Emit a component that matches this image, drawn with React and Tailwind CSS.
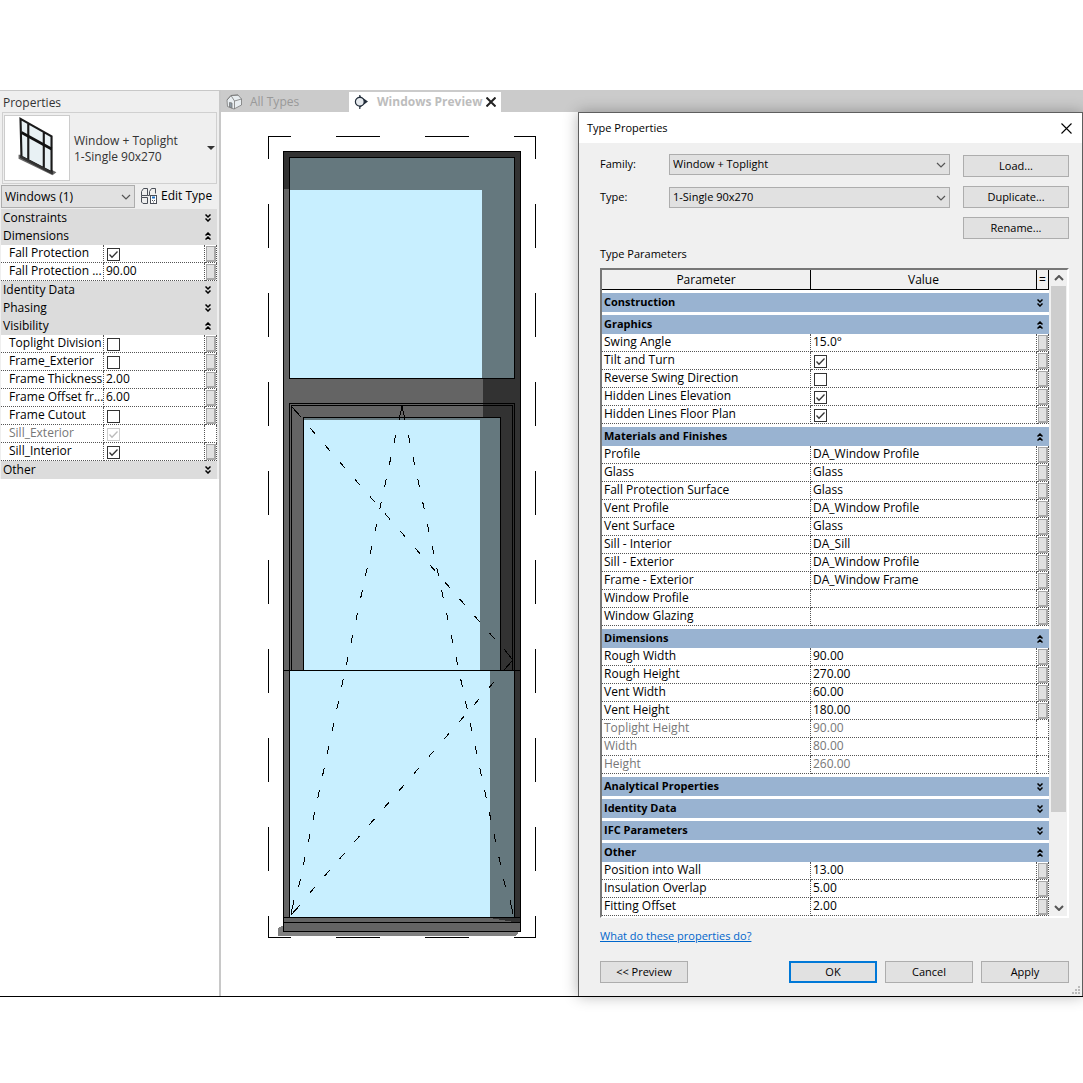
import React, { useState } from 'react';

const INSTANCE_GROUPS = [
  { name: 'Constraints', open: false, rows: [] },
  {
    name: 'Dimensions',
    open: true,
    rows: [
      { label: 'Fall Protection', checked: true },
      { label: 'Fall Protection ...', value: '90.00' },
    ],
  },
  { name: 'Identity Data', open: false, rows: [] },
  { name: 'Phasing', open: false, rows: [] },
  {
    name: 'Visibility',
    open: true,
    rows: [
      { label: 'Toplight Division', checked: false },
      { label: 'Frame_Exterior', checked: false },
      { label: 'Frame Thickness', value: '2.00' },
      { label: 'Frame Offset fr...', value: '6.00' },
      { label: 'Frame Cutout', checked: false },
      { label: 'Sill_Exterior', checked: true, disabled: true },
      { label: 'Sill_Interior', checked: true },
    ],
  },
  { name: 'Other', open: false, rows: [] },
];

const TYPE_GROUPS = [
  { name: 'Construction', open: false, rows: [] },
  {
    name: 'Graphics',
    open: true,
    rows: [
      { label: 'Swing Angle', value: '15.0°' },
      { label: 'Tilt and Turn', checked: true },
      { label: 'Reverse Swing Direction', checked: false },
      { label: 'Hidden Lines Elevation', checked: true },
      { label: 'Hidden Lines Floor Plan', checked: true },
    ],
  },
  {
    name: 'Materials and Finishes',
    open: true,
    rows: [
      { label: 'Profile', value: 'DA_Window Profile' },
      { label: 'Glass', value: 'Glass' },
      { label: 'Fall Protection Surface', value: 'Glass' },
      { label: 'Vent Profile', value: 'DA_Window Profile' },
      { label: 'Vent Surface', value: 'Glass' },
      { label: 'Sill - Interior', value: 'DA_Sill' },
      { label: 'Sill - Exterior', value: 'DA_Window Profile' },
      { label: 'Frame - Exterior', value: 'DA_Window Frame' },
      { label: 'Window Profile', value: '' },
      { label: 'Window Glazing', value: '' },
    ],
  },
  {
    name: 'Dimensions',
    open: true,
    rows: [
      { label: 'Rough Width', value: '90.00' },
      { label: 'Rough Height', value: '270.00' },
      { label: 'Vent Width', value: '60.00' },
      { label: 'Vent Height', value: '180.00' },
      { label: 'Toplight Height', value: '90.00', disabled: true },
      { label: 'Width', value: '80.00', disabled: true },
      { label: 'Height', value: '260.00', disabled: true },
    ],
  },
  { name: 'Analytical Properties', open: false, rows: [] },
  { name: 'Identity Data', open: false, rows: [] },
  { name: 'IFC Parameters', open: false, rows: [] },
  {
    name: 'Other',
    open: true,
    rows: [
      { label: 'Position into Wall', value: '13.00' },
      { label: 'Insulation Overlap', value: '5.00' },
      { label: 'Fitting Offset', value: '2.00' },
    ],
  },
];

// Double chevron at the end of a group header
const Expander = ({ open }) => (
  <svg viewBox="0 0 6 8" className={`h-2 w-[6px] ${open ? 'rotate-180' : ''}`} fill="none" stroke="#000" strokeWidth="1.5">
    <path d="M0.5 0.5 3 3 5.5 0.5M0.5 4.5 3 7 5.5 4.5" />
  </svg>
);

const Chevron = ({ up, className = '' }) => (
  <svg viewBox="0 0 10 6" className={`h-[6px] w-[10px] ${className}`} fill="none" stroke="#555" strokeWidth="1.2">
    <path d={up ? 'M1 5 5 1 9 5' : 'M1 1 5 5 9 1'} />
  </svg>
);

const CheckBox = ({ id, initial, disabled }) => {
  const [checked, setChecked] = useState(initial);
  return (
    <span className="grid h-[13px] w-[13px]">
      <input
        id={id}
        type="checkbox"
        checked={checked}
        disabled={disabled}
        onChange={(e) => setChecked(e.target.checked)}
        className="col-start-1 row-start-1 h-[13px] w-[13px] appearance-none border border-[#333] bg-white disabled:border-[#ccc]"
      />
      {checked && (
        <svg viewBox="0 0 13 13" className="pointer-events-none col-start-1 row-start-1" fill="none" stroke={disabled ? '#bbb' : '#333'} strokeWidth="1.3">
          <path d="M2.5 6.5 5 9.3 10.5 3.5" />
        </svg>
      )}
    </span>
  );
};

const Select = ({ id, label, options, className }) => (
  <span className="grid flex-1 items-center">
    <select
      id={id}
      aria-label={label}
      className={`col-start-1 row-start-1 w-full appearance-none border border-[#adadad] bg-[#e1e1e1] pr-6 text-black ${className}`}
    >
      {options.map((option) => (
        <option key={option}>{option}</option>
      ))}
    </select>
    <Chevron className="pointer-events-none col-start-1 row-start-1 mr-1 justify-self-end" />
  </span>
);

const Button = ({ children, className = '', primary }) => (
  <button
    type="button"
    className={`h-[22px] bg-[#e1e1e1] text-center ${primary ? 'border-2 border-[#0078d7] leading-[18px]' : 'border border-[#adadad] leading-5'} ${className}`}
  >
    {children}
  </button>
);

const ParameterRow = ({ row, prefix, indent }) => {
  const id = `${prefix}-${row.label.replace(/\W+/g, '-')}`;
  return (
    <tr className={`h-[18px] bg-white ${row.disabled ? 'text-[#777]' : 'text-black'}`}>
      <td className={`overflow-hidden border-r border-b border-dotted border-[#555] p-0 whitespace-nowrap ${indent}`}>
        {row.checked === undefined ? (
          <span className="block h-[17px] leading-4">{row.label}</span>
        ) : (
          <label htmlFor={id} className="block h-[17px] leading-4">{row.label}</label>
        )}
      </td>
      <td className="border-r border-b border-dotted border-[#555] p-0 pl-0.5">
        {row.checked === undefined ? (
          <span className="block h-[17px] leading-4">{row.value}</span>
        ) : (
          <span className="block h-[17px] pt-[3px] pl-px">
            <CheckBox id={id} initial={row.checked} disabled={row.disabled} />
          </span>
        )}
      </td>
      <td className="border-r border-b border-dotted border-[#555] p-0 pl-px">
        {!row.disabled && (
          <button type="button" aria-label={`Associate ${row.label}`} className="block h-4 w-[10px] border border-r-2 border-b-2 border-[#a8a8a8] bg-[#e1e1e1]" />
        )}
      </td>
    </tr>
  );
};

const TypeThumbnail = () => (
  <svg viewBox="0 0 66 66" className="h-[66px] w-[66px] border border-[#ccc] bg-white">
    <path d="M14 40 18 40 53 58 49 61 14 44z" fill="#666" />
    <path d="M16 3 48 21V58L17 42z" fill="#e8f1f4" />
    <path d="M16 3 48 21V58L17 42zM24 8V46M40 17V54" fill="none" stroke="#1a1a1a" strokeWidth="2.2" />
    <path d="M17 17 48 34" stroke="#111" strokeWidth="2.8" />
    <path d="M16 42 49 59" stroke="#333" strokeWidth="2.5" />
  </svg>
);

const EditTypeIcon = () => (
  <svg viewBox="0 0 16 16" className="h-4 w-4" fill="none" stroke="#4a4f58" strokeWidth="1">
    <path d="M0.5 3.5 2.5 0.5H6.5V7.5H0.5zM8.5 3.5 10.5 0.5H14.5V5.5M8.5 3.5V7.5M0.5 9.5H6.5V15.5H2L0.5 14zM0.5 7.5V9.5M6.5 7.5H8.5" />
    <rect x="9.5" y="7.5" width="6" height="8" fill="#fff" />
    <path d="M11 9.5H14" stroke="#1c6fc4" strokeWidth="2" />
    <path d="M11 12.5H12M13 12.5H14M12 14H13" />
  </svg>
);

const PropertiesPanel = () => (
  <aside className="w-[221px] shrink-0 border-t border-r-2 border-[#c8c8c8]">
    <div className="bg-[#efefef]">
      <h2 className="h-[21px] pl-[3px] text-[12px] leading-6 text-[#333]">Properties</h2>
      <div className="mr-0.5 ml-0.5 flex h-[72px] items-center border border-[#d0d0d0] pl-px text-[#333]">
        <TypeThumbnail />
        <div className="flex-1 pt-0.5 pl-1 leading-4">
          <p>Window + Toplight</p>
          <p>1-Single 90x270</p>
        </div>
        <button type="button" aria-label="Change type" className="mr-px p-0">
          <svg viewBox="0 0 8 4" className="h-1 w-2"><path d="M0 0H8L4 4z" fill="#333" /></svg>
        </button>
      </div>
      <div className="flex h-[25px] items-center pl-px">
        <div className="flex w-[134px]">
          <Select label="Selection filter" options={['Windows (1)']} className="h-[23px] pl-[3px]" />
        </div>
        <button type="button" className="ml-1.5 flex items-center gap-1 pb-0.5 text-black">
          <EditTypeIcon />
          Edit Type
        </button>
      </div>
      <table className="ml-px w-[216px] table-fixed border-separate border-spacing-0">
        <colgroup>
          <col className="w-[103px]" />
          <col />
          <col className="w-[12px]" />
        </colgroup>
        {INSTANCE_GROUPS.map((group) => (
          <tbody key={group.name}>
            <tr className="h-[18px] bg-[#dcdcdc]">
              <th colSpan={3} className="p-0 text-left font-normal">
                <div className="flex items-center justify-between pr-[6px] pl-0.5 leading-[18px]">
                  {group.name}
                  <Expander open={group.open} />
                </div>
              </th>
            </tr>
            {group.rows.map((row) => (
              <ParameterRow key={row.label} row={row} prefix="instance" indent="pl-2" />
            ))}
          </tbody>
        ))}
      </table>
    </div>
  </aside>
);

const Tabs = () => (
  <div className="flex h-[22px] items-end bg-[#cbcbcb]">
    <button type="button" className="flex h-5 w-32 items-center gap-2 pl-[5px] text-[#999]">
      <svg viewBox="0 0 16 16" className="h-4 w-4" stroke="#777" strokeWidth="0.8">
        <path d="M1 6 5 1.5 12 1 15.5 5V11L8 15 1.5 12.5z" fill="#e8edf0" />
        <path d="M1 6 5 1.5 8.5 7V15M8.5 7 15.5 5M5 1.5 12 1" fill="none" />
        <path d="M3.5 8.5 6 9V14L3.5 13z" fill="#8c9aa5" />
      </svg>
      All Types
    </button>
    <div className="flex h-5 w-[152px] items-center justify-between bg-white pr-[5px] pl-[5px]">
      <button type="button" className="flex items-center gap-2 font-bold text-[#bdbdbd]">
        <svg viewBox="0 0 15 15" className="h-[15px] w-[15px]">
          <path d="M6 1 14 6.5 6 12.5z" fill="#222d3a" />
          <circle cx="5.8" cy="6.7" r="4.4" fill="#e6eaee" stroke="#222d3a" strokeWidth="1.2" />
          <path d="M5.8 0V2.5M5.8 11V14" stroke="#222d3a" strokeWidth="1.2" />
        </svg>
        Windows Preview
      </button>
      <button type="button" aria-label="Close tab">
        <svg viewBox="0 0 10 10" className="h-[10px] w-[10px]" stroke="#222" strokeWidth="2"><path d="M0.5 0.5 9.5 9.5M9.5 0.5 0.5 9.5" /></svg>
      </button>
    </div>
  </div>
);

// Elevation of the window with its opening lines
const WindowPreview = () => (
  <svg viewBox="266 134 272 806" className="h-[806px] w-[272px]" shapeRendering="crispEdges" fill="none" stroke="none">
    <g stroke="#000" strokeDasharray="44 45" strokeDashoffset="21">
      <path d="M268 136.5H536M268 937.5H536M268.5 136V938M535.5 136V938" />
    </g>

    <path d="M278 928 284 925H518V933L516 936H278z" fill="#808080" />
    <rect x="283" y="151" width="238" height="781" fill="#646464" />
    <path d="M283 151H521V922H514L490 918H515V671H501V418H483V378H515V157H290V189H283z" fill="#323232" />

    <rect x="290" y="157" width="225" height="222" fill="#65787e" />
    <rect x="290" y="190" width="192" height="189" fill="#c8efff" />
    <rect x="304" y="418" width="197" height="253" fill="#65787e" />
    <rect x="304" y="420" width="176" height="251" fill="#c8efff" />
    <rect x="290" y="671" width="225" height="247" fill="#65787e" />
    <rect x="290" y="671" width="200" height="247" fill="#c8efff" />

    <g stroke="#000">
      <path d="M283.5 151.5H520.5V931.5H283.5z" />
      <path d="M289.5 157.5H514.5V378.5H289.5z" />
      <path d="M289.5 670V403.5H514.5V670M291.5 670V405.5H512.5V670" />
      <path d="M303.5 670V417.5H500.5V670" />
      <path d="M283 670.5H521M289.5 670V917M514.5 670V917" />
      <path d="M283 917.5H521M283 922.5H521" />
    </g>

    <g stroke="#000">
      <path d="M402 406 399 420M402 406 405 420" />
      <path d="M294 900 291 914M510 900 513 914" />
      <path d="M292 407 301 417M504 649 512 659" />
      <path d="M512 661 504 670M300 905 291 915" />
    </g>
    <g stroke="#000" strokeDasharray="8 14.7">
      <path d="M395.7 435 298 890M408.3 435 506 890" />
      <path d="M310 428 496 640.5" />
      <path d="M494 682 308 895" />
    </g>
  </svg>
);

const TypePropertiesDialog = () => (
  <section
    role="dialog"
    aria-labelledby="dialog-title"
    className="relative w-[505px] shrink-0 border border-b-0 border-[#5e5e5e] bg-[#f0f0f0] text-[11px] text-black shadow-[0_0_14px_rgba(0,0,0,0.3)]"
  >
    <header className="flex h-[30px] items-center justify-between bg-white pr-[10px] pl-2">
      <h1 id="dialog-title" className="text-[11px]">Type Properties</h1>
      <button type="button" aria-label="Close">
        <svg viewBox="0 0 11 11" className="h-[11px] w-[11px]" stroke="#000" strokeWidth="1.1"><path d="M0.5 0.5 10.5 10.5M10.5 0.5 0.5 10.5" /></svg>
      </button>
    </header>

    <div className="pt-[11px] pr-[13px] pb-[13px] pl-[21px]">
      <div className="flex gap-[13px]">
        <div className="flex flex-1 flex-col gap-3">
          <div className="flex h-[21px] items-center">
            <label htmlFor="family" className="w-[69px]">Family:</label>
            <Select id="family" options={['Window + Toplight']} className="h-[21px] pl-[3px]" />
          </div>
          <div className="flex h-[21px] items-center">
            <label htmlFor="type" className="w-[69px]">Type:</label>
            <Select id="type" options={['1-Single 90x270']} className="h-[21px] pl-[3px]" />
          </div>
        </div>
        <div className="flex w-[106px] flex-col gap-[9px] pt-px">
          <Button>Load...</Button>
          <Button>Duplicate...</Button>
          <Button>Rename...</Button>
        </div>
      </div>

      <h2 className="pt-[5px] pb-1 text-[11px] leading-5">Type Parameters</h2>

      <div className="flex border-2 border-t-[#777] border-r-white border-b-white border-l-[#777]">
        <table className="flex-1 table-fixed border-separate border-spacing-0 bg-white text-[12px]">
          <colgroup>
            <col className="w-[209px]" />
            <col />
            <col className="w-[12px]" />
          </colgroup>
          <thead>
            <tr className="h-5 bg-[#f0f0f0]">
              <th className="border-r border-b border-black p-0 leading-[18px] font-normal">Parameter</th>
              <th className="border-r border-b border-black p-0 leading-[18px] font-normal">Value</th>
              <th className="border-r border-b border-black p-0 leading-[18px] font-normal">=</th>
            </tr>
          </thead>
          {TYPE_GROUPS.map((group) => (
            <tbody key={group.name}>
              <tr>
                <th colSpan={3} className="p-0 pt-[3px] text-left text-[11px] font-bold">
                  <div className="flex h-[19px] items-center justify-between bg-[#99b3d1] pr-[6px] pl-0.5">
                    {group.name}
                    <Expander open={group.open} />
                  </div>
                </th>
              </tr>
              {group.rows.map((row) => (
                <ParameterRow key={row.label} row={row} prefix="type" indent="pl-0.5" />
              ))}
            </tbody>
          ))}
        </table>
        <div className="flex w-[18px] flex-col items-center pr-px pl-0.5">
          <button type="button" aria-label="Scroll up" className="grid h-4 w-full place-items-center"><Chevron up className="[stroke-width:2]" /></button>
          <div className="w-full flex-[525] bg-[#cdcdcd]" />
          <div className="flex-[88]" />
          <button type="button" aria-label="Scroll down" className="grid h-4 w-full place-items-center"><Chevron className="[stroke-width:2]" /></button>
        </div>
      </div>

      <a href="#help" className="mt-2 block w-fit leading-5 text-[#0066cc] underline">What do these properties do?</a>

      <div className="mt-[15px] flex gap-2">
        <Button className="mr-auto w-[88px]">&lt;&lt; Preview</Button>
        <Button primary className="w-[88px]">OK</Button>
        <Button className="w-[88px]">Cancel</Button>
        <Button className="w-[88px]">Apply</Button>
      </div>
    </div>

    <svg viewBox="0 0 9 9" className="absolute right-px bottom-px h-[9px] w-[9px]" fill="#bbb">
      <path d="M6 0H8V2H6zM3 3H5V5H3zM6 3H8V5H6zM0 6H2V8H0zM3 6H5V8H3zM6 6H8V8H6z" />
    </svg>
  </section>
);

const App = () => (
  <div className="min-h-screen bg-white pt-[90px] font-['Open_Sans','Noto_Sans',sans-serif] text-[12px]">
    <main className="flex border-b border-black">
      <PropertiesPanel />
      <div className="flex min-w-0 flex-1 flex-col">
        <Tabs />
        <div className="flex">
          <div className="flex-1 pt-[22px] pl-[45px]">
            <WindowPreview />
          </div>
          <TypePropertiesDialog />
        </div>
      </div>
    </main>
  </div>
);

export default App;
